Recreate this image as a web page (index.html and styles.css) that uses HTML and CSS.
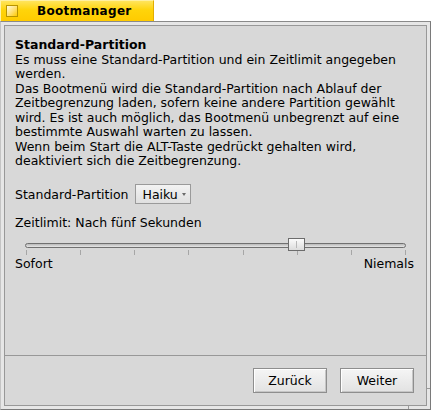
FILE: index.html
```html
<!DOCTYPE html>
<html>
<head>
<meta charset="utf-8">
<link rel="stylesheet" href="styles.css">
</head>
<body>
<div class="tab">
  <span class="close"></span>
  <span class="title">Bootmanager</span>
</div>
<div class="window">
  <div class="frame-inner">
    <div class="main">
      <div class="desc">
        <div class="heading">Standard-Partition</div>
        <div>Es muss eine Standard-Partition und ein Zeitlimit angegeben</div>
        <div>werden.</div>
        <div>Das Bootmenü wird die Standard-Partition nach Ablauf der</div>
        <div>Zeitbegrenzung laden, sofern keine andere Partition gewählt</div>
        <div>wird. Es ist auch möglich, das Bootmenü unbegrenzt auf eine</div>
        <div>bestimmte Auswahl warten zu lassen.</div>
        <div>Wenn beim Start die ALT-Taste gedrückt gehalten wird,</div>
        <div>deaktiviert sich die Zeitbegrenzung.</div>
      </div>
      <div class="row">
        <span>Standard-Partition</span>
        <div class="popup"><span>Haiku</span><span class="arrow"></span></div>
      </div>
      <div class="zeit">Zeitlimit: Nach fünf Sekunden</div>
      <div class="slider">
        <div class="track"><div class="thumb"></div></div>
        <div class="ticks"><i></i><i></i><i></i><i></i><i></i><i></i><i></i><i></i></div>
        <div class="ends"><span>Sofort</span><span>Niemals</span></div>
      </div>
    </div>
    <div class="buttons">
      <button class="btn">Zurück</button>
      <button class="btn">Weiter</button>
    </div>
  </div>
  <span class="grip-v"></span>
  <span class="grip-h"></span>
</div>
</body>
</html>
```

FILE: styles.css
```css
html, body {
  margin: 0;
  padding: 0;
  background: #fff;
  width: 431px;
  height: 410px;
  overflow: hidden;
}
body {
  font-family: "DejaVu Sans", sans-serif;
  font-size: 12.5px;
  color: #000;
}
.tab {
  width: 154px;
  height: 21px;
  box-sizing: border-box;
  display: flex;
  align-items: center;
  padding-left: 5px;
  background: linear-gradient(#ffe45c, #ffd40a 45%, #ffcb00);
  border-left: 1px solid #fff2a8;
  border-top: 1px solid #fff0a0;
  border-right: 1px solid #e2ae00;
}
.close {
  width: 12px;
  height: 12px;
  box-sizing: border-box;
  border: 1px solid #b89400;
  background: linear-gradient(135deg, #fffbe0, #ffe070 55%, #ffcb00);
}
.title {
  font-weight: bold;
  font-size: 12px;
  margin-left: 19px;
  letter-spacing: 0.3px;
}
.window {
  position: relative;
  height: 389px;
  box-sizing: border-box;
  border: 1px solid;
  border-color: #8a8a8a #7a7a7a #7a7a7a #c4c4c4;
  background: #e6e6e6;
  padding: 3px;
}
.frame-inner {
  height: 100%;
  box-sizing: border-box;
  border: 1px solid #989898;
  background: #d8d8d8;
  display: flex;
  flex-direction: column;
}
.main {
  flex: 1;
  padding: 12px 12px 0 10px;
}
.desc {
  line-height: 14.5px;
  white-space: nowrap;
}
.heading {
  font-weight: bold;
}
.row {
  display: flex;
  align-items: center;
  gap: 7px;
  margin-top: 15.5px;
}
.popup {
  width: 56px;
  height: 20px;
  box-sizing: border-box;
  border: 1px solid #9a9a9a;
  background: linear-gradient(#f3f3f3, #e0e0e0);
  display: flex;
  align-items: center;
  padding: 0 4px 0 6px;
}
.arrow {
  margin-left: auto;
  width: 0;
  height: 0;
  border-left: 2.5px solid transparent;
  border-right: 2.5px solid transparent;
  border-top: 3px solid #6a6a6a;
}
.zeit {
  margin-top: 12px;
  line-height: 14.5px;
}
.track {
  position: relative;
  margin: 12px 8px 0 10px;
  height: 5px;
  box-sizing: border-box;
  border: 1px solid #707070;
  border-radius: 3px;
  background: linear-gradient(#b8b8b8, #e6e6e6);
}
.thumb {
  position: absolute;
  left: 262px;
  top: -6px;
  width: 17px;
  height: 13px;
  box-sizing: border-box;
  border: 1px solid #6c6c6c;
  background: linear-gradient(#fbfbfb, #dcdcdc);
}
.thumb::after {
  content: "";
  position: absolute;
  left: 7px;
  top: 2px;
  width: 1px;
  height: 7px;
  background: #b8b8b8;
}
.ticks {
  display: flex;
  justify-content: space-between;
  margin: 2px 8px 0 11px;
  height: 5px;
}
.ticks i {
  width: 1px;
  background: #a6a6a6;
}
.ends {
  display: flex;
  justify-content: space-between;
  margin-top: 2.75px;
  line-height: 14.5px;
}
.buttons {
  border-top: 1px solid #989898;
  padding: 12px 12px 12px 0;
  display: flex;
  justify-content: flex-end;
  gap: 13px;
}
.btn {
  width: 74px;
  height: 25px;
  box-sizing: border-box;
  padding: 0;
  border: 1px solid #8e8e8e;
  background: linear-gradient(#f5f5f5, #e2e2e2);
  box-shadow: inset 1px 1px #ffffff, inset -1px -1px #c6c6c6;
  font-family: "DejaVu Sans", sans-serif;
  font-size: 12.5px;
  color: #000;
}
.grip-v {
  position: absolute;
  left: 407px;
  bottom: 0;
  width: 1px;
  height: 3px;
  background: #9a9a9a;
}
.grip-h {
  position: absolute;
  right: 0;
  top: 366px;
  width: 3px;
  height: 1px;
  background: #9a9a9a;
}
```
